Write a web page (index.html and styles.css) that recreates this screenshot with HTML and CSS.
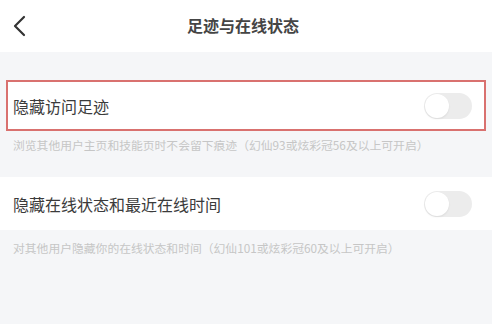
FILE: index.html
```html
<!DOCTYPE html>
<html lang="zh">
<head>
<meta charset="utf-8">
<link rel="stylesheet" href="styles.css">
</head>
<body>
<div class="page">
  <header class="topbar">
    <span class="back">
      <svg width="14" height="22" viewBox="0 0 14 22"><path d="M12 2 L3 11 L12 20" fill="none" stroke="#333" stroke-width="2.2" stroke-linecap="round" stroke-linejoin="round"/></svg>
    </span>
    <h1 class="title">足迹与在线状态</h1>
    <span class="spacer"></span>
  </header>
  <section class="group first">
    <div class="row highlighted">
      <span class="label">隐藏访问足迹</span>
      <span class="switch"><span class="knob"></span></span>
    </div>
    <p class="note">浏览其他用户主页和技能页时不会留下痕迹（幻仙93或炫彩冠56及以上可开启）</p>
  </section>
  <section class="group second">
    <div class="row">
      <span class="label">隐藏在线状态和最近在线时间</span>
      <span class="switch"><span class="knob"></span></span>
    </div>
    <p class="note">对其他用户隐藏你的在线状态和时间（幻仙101或炫彩冠60及以上可开启）</p>
  </section>
</div>
</body>
</html>
```
FILE: styles.css
```css
html, body {
  margin: 0;
  padding: 0;
  background: #f5f6f8;
}
.page {
  width: 492px;
  height: 324px;
  overflow: hidden;
  font-family: "Noto Sans CJK SC", "Noto Sans", sans-serif;
  background: #f5f6f8;
}
.topbar {
  height: 52px;
  background: #fff;
  display: flex;
  align-items: center;
  padding: 0 12px 0 12px;
  box-sizing: border-box;
}
.back {
  width: 40px;
  display: flex;
  align-items: center;
  margin-top: -1px;
}
.back svg { display: block; }
.title {
  flex: 1;
  margin: 0 0 2px 0;
  text-align: center;
  font-size: 16px;
  font-weight: 600;
  color: #454545;
  letter-spacing: 0;
  padding-right: 6px;
}
.spacer { width: 40px; }
.group { margin: 0; }
.group.first { padding-top: 28px; }
.row {
  background: #fff;
  display: flex;
  align-items: center;
  justify-content: space-between;
  height: 53px;
  padding: 0 20px 0 13px;
  box-sizing: border-box;
}
.row.highlighted {
  height: 51px;
  margin: 0 6px;
  border: 2px solid #d9716f;
  padding: 0 12px 0 5px;
}
.label {
  font-size: 16px;
  color: #3b3b3b;
  line-height: 1;
}
.switch {
  width: 48px;
  height: 26px;
  border-radius: 13px;
  background: #ececec;
  position: relative;
  display: block;
}
.knob {
  position: absolute;
  left: 1px;
  top: 1px;
  width: 24px;
  height: 24px;
  border-radius: 50%;
  background: #fff;
  box-shadow: 0 1px 2px rgba(0,0,0,0.08);
}
.note {
  margin: 0;
  padding: 6px 0 0 13px;
  height: 46px;
  box-sizing: border-box;
  font-size: 11.8px;
  line-height: 16px;
  color: #c6c6c6;
  white-space: nowrap;
}
.group.second .note { padding-top: 10px; }
```
